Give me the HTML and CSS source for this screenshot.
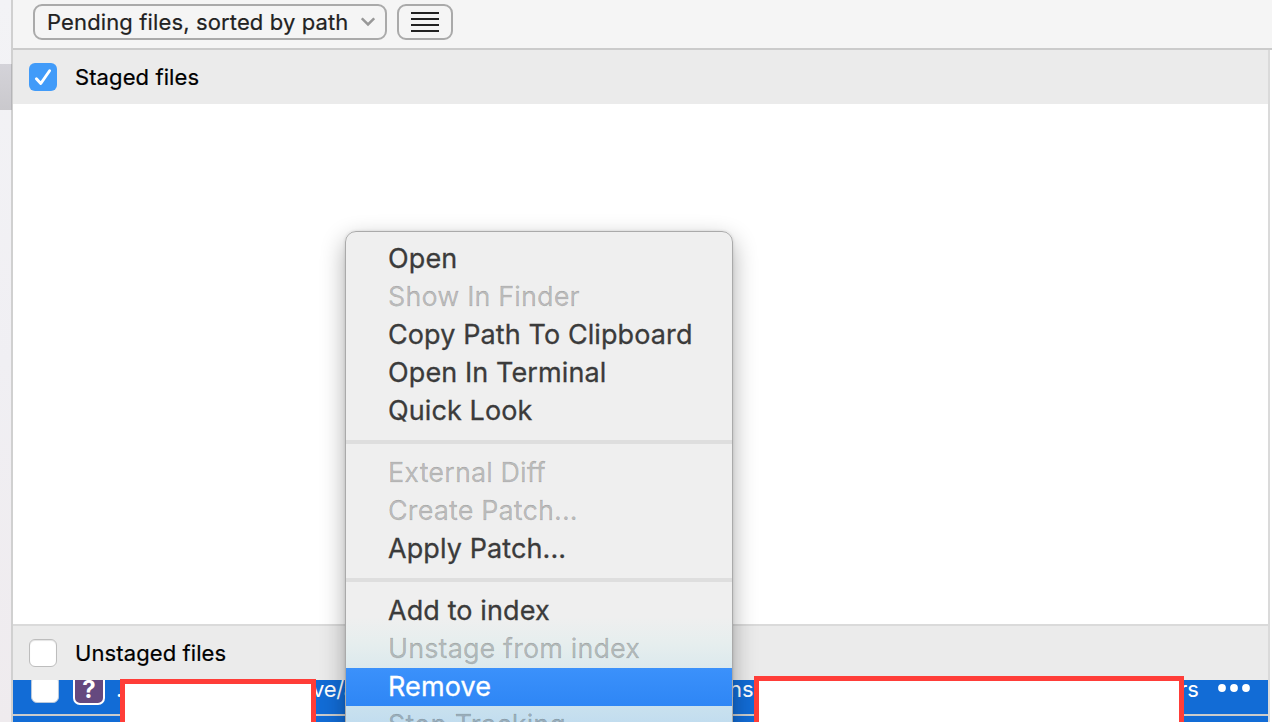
FILE: index.html
```html
<!DOCTYPE html>
<html lang="en">
<head>
<meta charset="utf-8">
<title>Pending files</title>
<link rel="stylesheet" href="styles.css">
</head>
<body>
<div class="window">
  <aside class="sidebar"><div class="sidebar-selection"></div></aside>
  <main class="main">
    <header class="toolbar">
      <button class="tool-button sort-button"><span>Pending files, sorted by path</span>
        <svg class="chevron" width="14" height="10" viewBox="0 0 14 10"><path d="M.8 1.3 7 7.5 13.2 1.3" fill="none" stroke="#989898" stroke-width="2.5"/></svg>
      </button>
      <button class="tool-button list-button" aria-label="View">
        <svg width="28" height="20" viewBox="0 0 28 20"><path d="M0 1h28M0 7h28M0 13h28M0 19h28" stroke="#222" stroke-width="2"/></svg>
      </button>
    </header>
    <div class="files">
      <section class="section-header">
        <span class="checkbox checked"><svg width="28" height="28" viewBox="0 0 28 28"><path d="M7.4 15.7 11.8 20.5 20.6 7.7" fill="none" stroke="#fff" stroke-width="2.9" stroke-linecap="round" stroke-linejoin="round"/></svg></span>
        <span class="section-title">Staged files</span>
      </section>
      <div class="staged-list"></div>
      <section class="section-header unstaged">
        <span class="checkbox"></span>
        <span class="section-title">Unstaged files</span>
      </section>
      <div class="unstaged-list">
        <div class="file-row">
          <span class="checkbox row-checkbox"></span>
          <span class="badge">?</span>
          <span class="path path-start">.</span>
          <span class="path path-a">ve/a</span>
          <span class="path path-b">ns</span>
          <span class="path path-c">rs</span>
          <svg class="more" width="32" height="8" viewBox="0 0 32 8" fill="#fff"><circle cx="4" cy="4" r="3.9"/><circle cx="16" cy="4" r="3.9"/><circle cx="28" cy="4" r="3.9"/></svg>
        </div>
        <div class="file-row"></div>
      </div>
    </div>
  </main>
  <nav class="menu">
    <div class="item">Open</div>
    <div class="item disabled">Show In Finder</div>
    <div class="item">Copy Path To Clipboard</div>
    <div class="item">Open In Terminal</div>
    <div class="item">Quick Look</div>
    <hr class="separator">
    <div class="item disabled">External Diff</div>
    <div class="item disabled">Create Patch...</div>
    <div class="item">Apply Patch...</div>
    <hr class="separator">
    <div class="item">Add to index</div>
    <div class="item disabled">Unstage from index</div>
    <div class="item selected">Remove</div>
    <div class="item disabled">Stop Tracking</div>
  </nav>
  <div class="redaction redaction-left"></div>
  <div class="redaction redaction-right"></div>
</div>
</body>
</html>
```
FILE: styles.css
```css
* { box-sizing: border-box; }
body { margin: 0; font-family: Inter, "Liberation Sans", sans-serif; }
.window { position: relative; display: flex; width: 1272px; height: 722px; overflow: hidden; background: #fff; }
.sidebar { width: 13px; flex: none; padding-top: 64px; border-right: 2px solid #d0d0d0; background: linear-gradient(#f3f3f6, #f0eff3 50%, #efebee); }
.sidebar-selection { width: 12px; height: 46px; background: linear-gradient(#d4d3d9, #cac9cd); border-right: 1px solid #b5b5b8; }
.main { flex: 1; display: flex; flex-direction: column; min-width: 0; }
.toolbar { height: 50px; flex: none; display: flex; gap: 10px; padding: 4px 0 0 20px; background: #f5f5f5; border-bottom: 2px solid #cbcbcb; }
.tool-button { height: 36px; border: 2px solid #aaa; border-radius: 9px; background: #f5f5f5; padding: 0; display: flex; align-items: center; color: #222; font: 22px/32px Inter, "Liberation Sans", sans-serif; white-space: nowrap; }
.sort-button { width: 354px; padding: 0 10px 0 12px; justify-content: space-between; letter-spacing: 0.13px; -webkit-text-stroke: 0.2px; }
.list-button { width: 56px; justify-content: center; }
.files { width: 1257px; flex: 1; display: flex; flex-direction: column; border-right: 2px solid #dadada; min-height: 0; }
.section-header { height: 54px; flex: none; display: flex; align-items: center; gap: 18px; padding-left: 16px; background: #ebebeb; color: #000; }
.section-header.unstaged { height: 56px; border-top: 2px solid #dadada; }
.section-title { font-size: 22px; letter-spacing: 0.1px; -webkit-text-stroke: 0.2px; }
.checkbox { width: 28px; height: 28px; flex: none; border-radius: 6px; border: 1px solid #bdbdbd; background: #fff; box-shadow: inset 0 1px 1px #e4e4e4; }
.checkbox.checked { border: 0; background: #419bf9; box-shadow: none; }
.checked svg { display: block; }
.staged-list { height: 520px; flex: none; background: #fff; }
.unstaged-list { flex: 1; overflow: hidden; }
.file-row { height: 36px; display: flex; align-items: flex-start; padding-left: 18px; background: #126cd6; border-bottom: 2px solid #ccc; color: #fff; }
.row-checkbox { margin-top: -5px; border-color: #b8c8dc; }
.badge { width: 32px; height: 34px; flex: none; margin: -9px 0 0 14px; border: 2px solid #fff; border-radius: 7px; background: #65497f; text-align: center; font: bold 24px/33px Inter, sans-serif; }
.path { font-size: 22px; line-height: 28px; margin-top: -5px; flex: none; }
.path-start { width: 196px; margin-left: 11px; }
.path-a { width: 417px; letter-spacing: -0.3px; }
.path-b { width: 450px; }
.path-c { width: 39px; }
.more { margin-top: 4px; flex: none; }
.menu { position: absolute; left: 345px; top: 231px; width: 388px; height: 520px; padding-top: 8px; border: 1px solid #aaa; border-radius: 11px; background: linear-gradient(#efefef 0, #efefef 385px, #e6eeee 412px, #dce9ed 436px, #c9e1ee 474px, #c2ddef 490px); box-shadow: 0 9px 24px rgba(0,0,0,.32), 0 0 3px rgba(0,0,0,.12); }
.item { height: 38px; padding-left: 42px; font-size: 27px; letter-spacing: 0.1px; -webkit-text-stroke: 0.3px; line-height: 37px; color: #3b3b3b; white-space: nowrap; }
.disabled { color: rgba(0,0,0,.24); }
.selected { background: linear-gradient(#3b91fb, #2e86f5); color: #fff; }
.separator { height: 4px; margin: 10px 0; border: 0; background: #dedede; }
.redaction { position: absolute; border: 5px solid #ff3d38; background: #fff; }
.redaction-left { left: 120px; top: 679px; width: 196px; height: 60px; }
.redaction-right { left: 754px; top: 676px; width: 430px; height: 60px; }
```
